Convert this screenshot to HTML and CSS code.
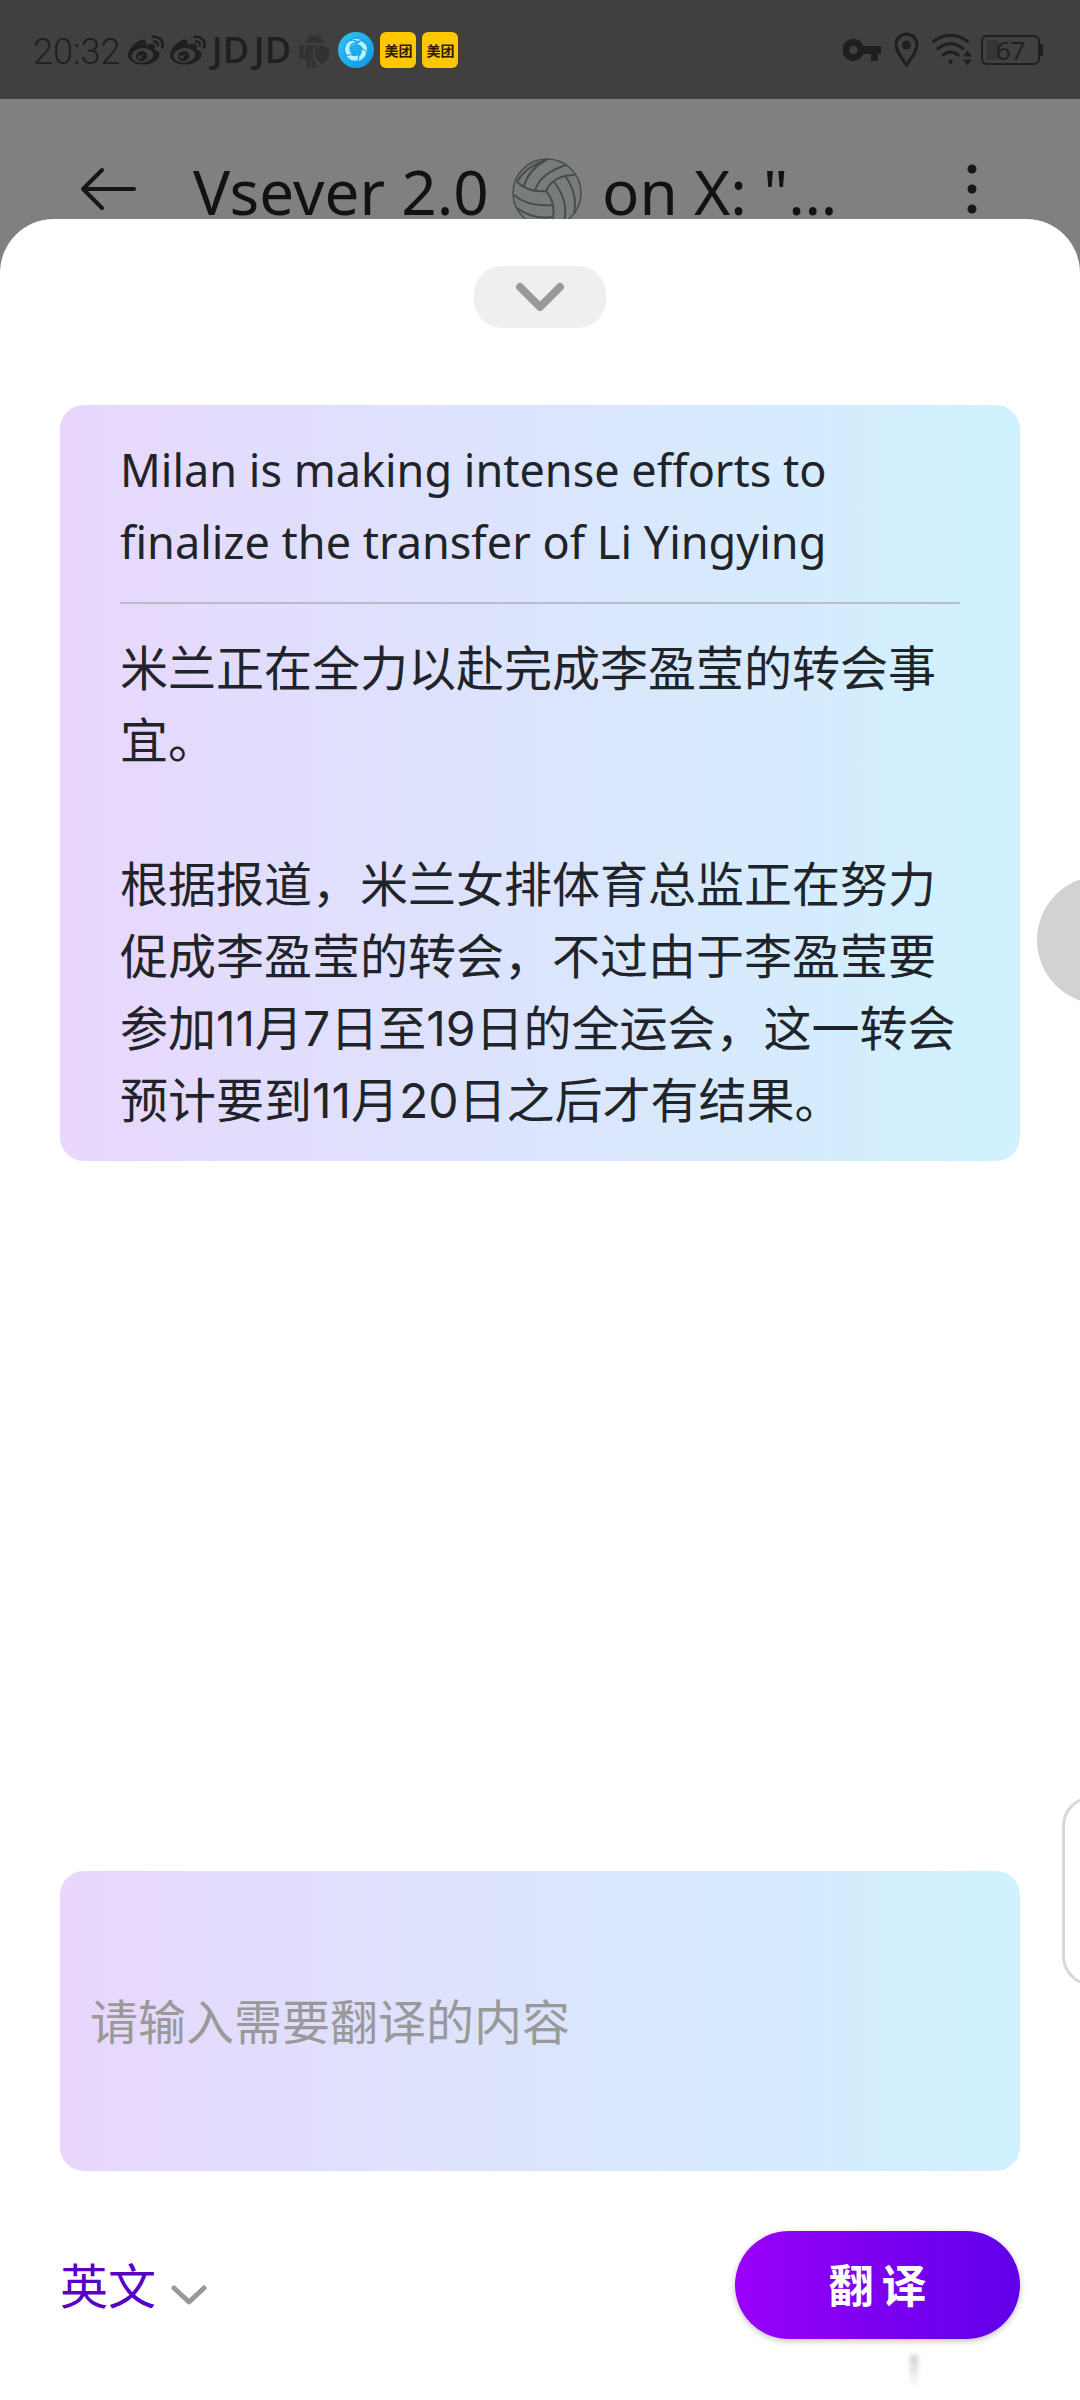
FILE: index.html
```
<!DOCTYPE html>
<html lang="zh-CN">
<head>
<meta charset="utf-8">
<meta name="viewport" content="width=device-width, initial-scale=1">
<title>翻译</title>
<link rel="stylesheet" href="styles.css">
</head>
<body>
<svg class="defs" aria-hidden="true">
  <symbol id="weibo" viewBox="0 0 24 24"><path d="M10.098 20.323c-3.977.391-7.414-1.406-7.672-4.02-.259-2.609 2.759-5.047 6.74-5.441 3.979-.394 7.413 1.404 7.671 4.018.259 2.6-2.759 5.049-6.737 5.439l-.002.004zM9.05 17.219c-.384.616-1.208.884-1.829.602-.612-.279-.793-.991-.406-1.593.379-.595 1.176-.861 1.793-.601.622.263.82.972.442 1.592zm1.27-1.627c-.141.237-.449.353-.689.253-.236-.09-.313-.361-.177-.586.138-.227.436-.346.672-.24.239.09.315.36.18.601l.014-.028zm.176-2.719c-1.893-.493-4.033.45-4.857 2.118-.836 1.704-.026 3.591 1.886 4.21 1.983.64 4.318-.341 5.132-2.179.8-1.793-.201-3.642-2.161-4.149zm7.563-1.224c-.346-.105-.57-.18-.405-.615.375-.977.42-1.804 0-2.404-.781-1.112-2.915-1.053-5.364-.03 0 0-.766.331-.571-.271.376-1.217.315-2.224-.27-2.809-1.338-1.337-4.869.045-7.888 3.08C1.309 10.87 0 13.273 0 15.348c0 3.981 5.099 6.395 10.086 6.395 6.536 0 10.888-3.801 10.888-6.82 0-1.822-1.547-2.854-2.915-3.284v.01zm1.908-5.092c-.766-.856-1.908-1.187-2.96-.962-.436.09-.706.511-.616.932.09.42.511.691.932.602.511-.105 1.067.044 1.442.465.376.421.466.977.316 1.473-.136.406.089.856.51.992.405.119.857-.105.992-.512.33-1.021.12-2.178-.646-3.035l.03.045zm2.418-2.195c-1.576-1.757-3.905-2.419-6.054-1.968-.496.104-.812.587-.706 1.081.104.496.586.813 1.082.707 1.532-.331 3.185.15 4.296 1.383 1.112 1.246 1.429 2.943.947 4.416-.165.48.106 1.007.586 1.157.479.165.991-.104 1.157-.586.675-2.088.241-4.478-1.338-6.235l.03.045z"/></symbol>
</svg>

<div class="status-bar">
  <div class="status-group status-left">
    <span class="clock">20:32</span>
    <svg class="app-icon"><use href="#weibo"/></svg>
    <svg class="app-icon"><use href="#weibo"/></svg>
    <span class="app-icon jd">JD</span>
    <span class="app-icon jd">JD</span>
    <svg class="app-icon android" viewBox="0 0 36 36">
      <path d="M9 11a10 8.500 0 0 1 5-6.500L12.500 2l1-.8 1.800 2.600a11 11 0 0 1 6 0L23 1.200l1 .8-1.500 2.500A10 8.500 0 0 1 27.500 11z"/>
      <rect x="3" y="13" width="5" height="14" rx="2.500"/>
      <path d="M10 13h14l-7 3.500v8q0 4 4 7.500-1 4-3 4t-2-4v-3h-1v5q0 2-2 2t-2-2v-5q-3 0-3-3z"/>
      <path d="M26 13q3.500 3 7 3v7q0 5-7 9-7-4-7-9v-7q3.500 0 7-3z"/>
    </svg>
    <svg class="app-icon" viewBox="0 0 36 36">
      <defs><linearGradient id="sky" x1="0" y1="0" x2="1" y2="1"><stop offset="0" stop-color="#35c4f0"/><stop offset="1" stop-color="#0c94e8"/></linearGradient>
      <path id="blade" d="M10 10.500q5-6 12-3.500 6 3 4.500 11-2-6-6.500-6.500-5 0-6.500 4.500-2.500-2.500-3.500-5.500z"/></defs>
      <circle cx="18" cy="18" r="18" fill="url(#sky)"/>
      <g fill="#b9f3fb" stroke="#1ca6ea" stroke-width="1.200">
        <use href="#blade"/><use href="#blade" transform="rotate(72 18 18)"/><use href="#blade" transform="rotate(144 18 18)"/><use href="#blade" transform="rotate(216 18 18)"/><use href="#blade" transform="rotate(288 18 18)"/>
      </g>
    </svg>
    <span class="app-icon meituan">美团</span>
    <span class="app-icon meituan">美团</span>
  </div>
  <div class="status-group status-right">
    <svg width="38" height="22" viewBox="0 0 38 22"><path fill-rule="evenodd" d="M10.500 0a11 11 0 0 1 10 7H38v8h-3v7h-7v-7h-7.500A11 11 0 1 1 10.500 0zm0 7a4 4 0 1 0 0 8 4 4 0 0 0 0-8z"/></svg>
    <svg width="25" height="36" viewBox="0 0 25 36"><path class="line" d="M12.500 33C7 25 2 19 2 12.500a10.500 10.500 0 0 1 21 0C23 19 18 25 12.500 33z"/><circle cx="12.500" cy="13" r="4.500"/></svg>
    <svg width="40" height="32" viewBox="0 0 40 32"><path class="line" d="M1.500 7.500q17-12.500 34 0M6 14.500q12.500-9.500 25 0M11 21q7.500-6 15 0"/><circle cx="18.500" cy="27.500" r="2.200"/><path d="M31 22.500l4.500-6 4.500 6zM31 25.500l4.500 6 4.500-6z"/></svg>
    <span class="battery">67</span>
  </div>
</div>

<header class="app-bar">
  <button class="icon-button" aria-label="返回">
    <svg width="56" height="44" viewBox="0 0 56 44"><path class="stroke" d="M54 22H3M22 3L3 22l19 19"/></svg>
  </button>
  <h1 class="page-title">Vsever 2.0 <svg class="ball" viewBox="0 0 70 70">
    <circle cx="35" cy="35" r="34" fill="#777c7c"/>
    <g fill="none" stroke="#484c4c" stroke-width="2">
      <circle cx="35" cy="35" r="34" stroke-width="1.500"/>
      <path d="M5 24q12 11 29 9 7-16 29-16M5 24Q13 9 36 1M12 28Q17 11 34 2M23 33q4-17 31-26M34 33q12 14 5 36M2 37q14 12 38 10M5 50q16 12 35 9M42 24q15 19 10 40M53 18q13 17 9 38"/>
    </g></svg> on X: "…</h1>
  <button class="icon-button" aria-label="更多">
    <svg width="10" height="50" viewBox="0 0 10 50"><circle cx="5" cy="5" r="4.500"/><circle cx="5" cy="25" r="4.500"/><circle cx="5" cy="45" r="4.500"/></svg>
  </button>
</header>

<main class="sheet">
  <button class="collapse" aria-label="收起">
    <svg width="50" height="30" viewBox="0 0 50 30"><path class="chevron thick" d="M5 5l20 20L45 5"/></svg>
  </button>

  <article class="panel result">
    <p class="source" lang="en">Milan is making intense efforts to finalize the transfer of Li Yingying</p>
    <p>米兰正在全力以赴完成李盈莹的转会事宜。</p>
    <p>根据报道，米兰女排体育总监正在努力促成李盈莹的转会，不过由于李盈莹要参加11月7日至19日的全运会，这一转会预计要到11月20日之后才有结果。</p>
  </article>

  <form class="composer">
    <input class="panel query" type="text" placeholder="请输入需要翻译的内容" aria-label="翻译内容">
    <div class="actions">
      <label class="language">
        <select aria-label="目标语言"><option>英文</option></select>
        <svg width="36" height="22" viewBox="0 0 36 22"><path class="chevron" d="M3 4l15 14L33 4"/></svg>
      </label>
      <button class="submit" type="button"><span>翻</span><span>译</span></button>
    </div>
  </form>
</main>

<div class="edge-layer" aria-hidden="true">
  <div class="float-ball"></div>
  <div class="side-tab"></div>
  <div class="smudge"></div>
</div>
</body>
</html>
```
FILE: styles.css
```
* { box-sizing: border-box; }

body {
  margin: 0;
  min-height: 100vh;
  display: flex;
  flex-direction: column;
  position: relative;
  background: #808080;
  color: #202428;
  font-family: Inter, "Noto Sans CJK SC", sans-serif;
  font-size: 48px;
  line-height: 72px;
}

button, input, select { font: inherit; color: inherit; border: 0; padding: 0; background: none; }
svg { display: block; flex: none; }
.defs { position: absolute; width: 0; height: 0; }

/* Status bar */
.status-bar {
  height: 99px;
  padding: 0 40px 0 33px;
  display: flex;
  align-items: center;
  justify-content: space-between;
  background: #404040;
  color: #1f1f1f;
  fill: #1f1f1f;
  line-height: 36px;
}
.status-group { display: flex; align-items: center; }
.status-left { gap: 6px; }
.status-right { gap: 13px; }
.clock { font-family: Roboto, sans-serif; font-size: 36px; font-weight: 300; padding: 4px 2px 0 0; }
.app-icon { width: 36px; height: 36px; flex: none; }
.jd { display: flex; justify-content: center; font-family: "Open Sans", sans-serif; font-size: 36px; font-weight: 600; }
.android { fill: #323232; }
.meituan {
  border-radius: 6px;
  background: #fec700;
  color: #2c1c00;
  font-family: "Noto Sans CJK SC", sans-serif;
  font-size: 14px;
  font-weight: 700;
  text-align: center;
}
.line { fill: none; stroke: #1f1f1f; stroke-width: 3; stroke-linecap: round; }
.battery {
  position: relative;
  width: 59px;
  height: 30px;
  margin-left: -4px;
  border: 2px solid #1f1f1f;
  border-radius: 6px;
  background: linear-gradient(#353535, #353535) 4px 3px / 12px 20px no-repeat;
  font-family: "Open Sans", sans-serif;
  font-size: 26px;
  font-weight: 400;
  line-height: 26px;
  text-align: center;
}
.battery::after {
  content: "";
  position: absolute;
  right: -5px;
  top: 7px;
  width: 3px;
  height: 12px;
  background: #1f1f1f;
}

/* App bar */
.app-bar {
  height: 180px;
  padding: 0 103px 0 80px;
  display: flex;
  align-items: center;
  color: #121212;
}
.icon-button { display: flex; fill: #161616; }
.stroke { fill: none; stroke: #161616; stroke-width: 4; stroke-linecap: round; stroke-linejoin: round; }
.page-title {
  flex: 1;
  margin: 0 0 0 57px;
  padding-top: 4px;
  font-family: "Noto Sans", sans-serif;
  font-size: 62px;
  font-weight: 400;
  white-space: nowrap;
}
.ball { display: inline-block; width: 70px; height: 70px; margin: 0 4px 0 7px; vertical-align: -13px; }

/* Translation sheet */
.sheet {
  position: relative;
  flex: 1;
  margin-top: -60px;
  padding: 47px 60px 61px;
  display: flex;
  flex-direction: column;
  background: #fff;
  border-radius: 54px 54px 0 0;
}
.collapse {
  align-self: center;
  width: 132px;
  height: 62px;
  display: grid;
  place-items: center;
  border-radius: 28px;
  background: #efefef;
}
.chevron { fill: none; stroke: #999; stroke-width: 5; stroke-linecap: round; stroke-linejoin: round; }
.thick { stroke-width: 8; }
.panel {
  border-radius: 24px;
  background: linear-gradient(90deg, #e9d6fd, #e2ddfd 20%, #dbe5fd 52%, #d0f2fe);
}
.result { margin-top: 77px; padding: 29px 60px 24px; }
.result p { margin: 0 0 72px; }
.result p:last-child { margin-bottom: 0; }
.result .source {
  margin-bottom: 29px;
  padding-bottom: 24px;
  border-bottom: 2px solid #bcbcc6;
  font-family: "Noto Sans", sans-serif;
  font-size: 45px;
}

/* Input area */
.composer { margin-top: auto; display: flex; flex-direction: column; gap: 60px; }
.query { width: 100%; height: 300px; padding: 2px 30px 0; }
.query::placeholder { color: #999; opacity: 1; }
.actions { display: flex; align-items: center; justify-content: space-between; }
.language { display: flex; align-items: center; gap: 14px; padding-top: 3px; color: #5800c4; }
.language select { appearance: none; }
.language svg { margin-top: 16px; }
.submit {
  width: 285px;
  height: 108px;
  padding-top: 3px;
  display: flex;
  align-items: center;
  justify-content: center;
  gap: 8px;
  border-radius: 54px;
  background: linear-gradient(90deg, #9a00fa, #5f00e8);
  box-shadow: 0 2px 6px rgba(0, 0, 0, .25);
  color: #fff;
  font-size: 45px;
  font-weight: 600;
}

/* Items that hang over the right edge of the screen */
.edge-layer { position: absolute; inset: 0; overflow: hidden; pointer-events: none; }
.float-ball {
  position: absolute;
  right: -85px;
  top: 876px;
  width: 128px;
  height: 128px;
  border-radius: 50%;
  background: #d2d2d4;
}
.side-tab {
  position: absolute;
  right: -42px;
  bottom: 414px;
  width: 60px;
  height: 190px;
  border: 3px solid #d8d8d8;
  border-radius: 30px;
  background: #fff;
}
.smudge {
  position: absolute;
  right: 162px;
  bottom: 15px;
  width: 8px;
  height: 30px;
  background: linear-gradient(#d0d0d0, #f8f8f8);
  filter: blur(2px);
}
```
